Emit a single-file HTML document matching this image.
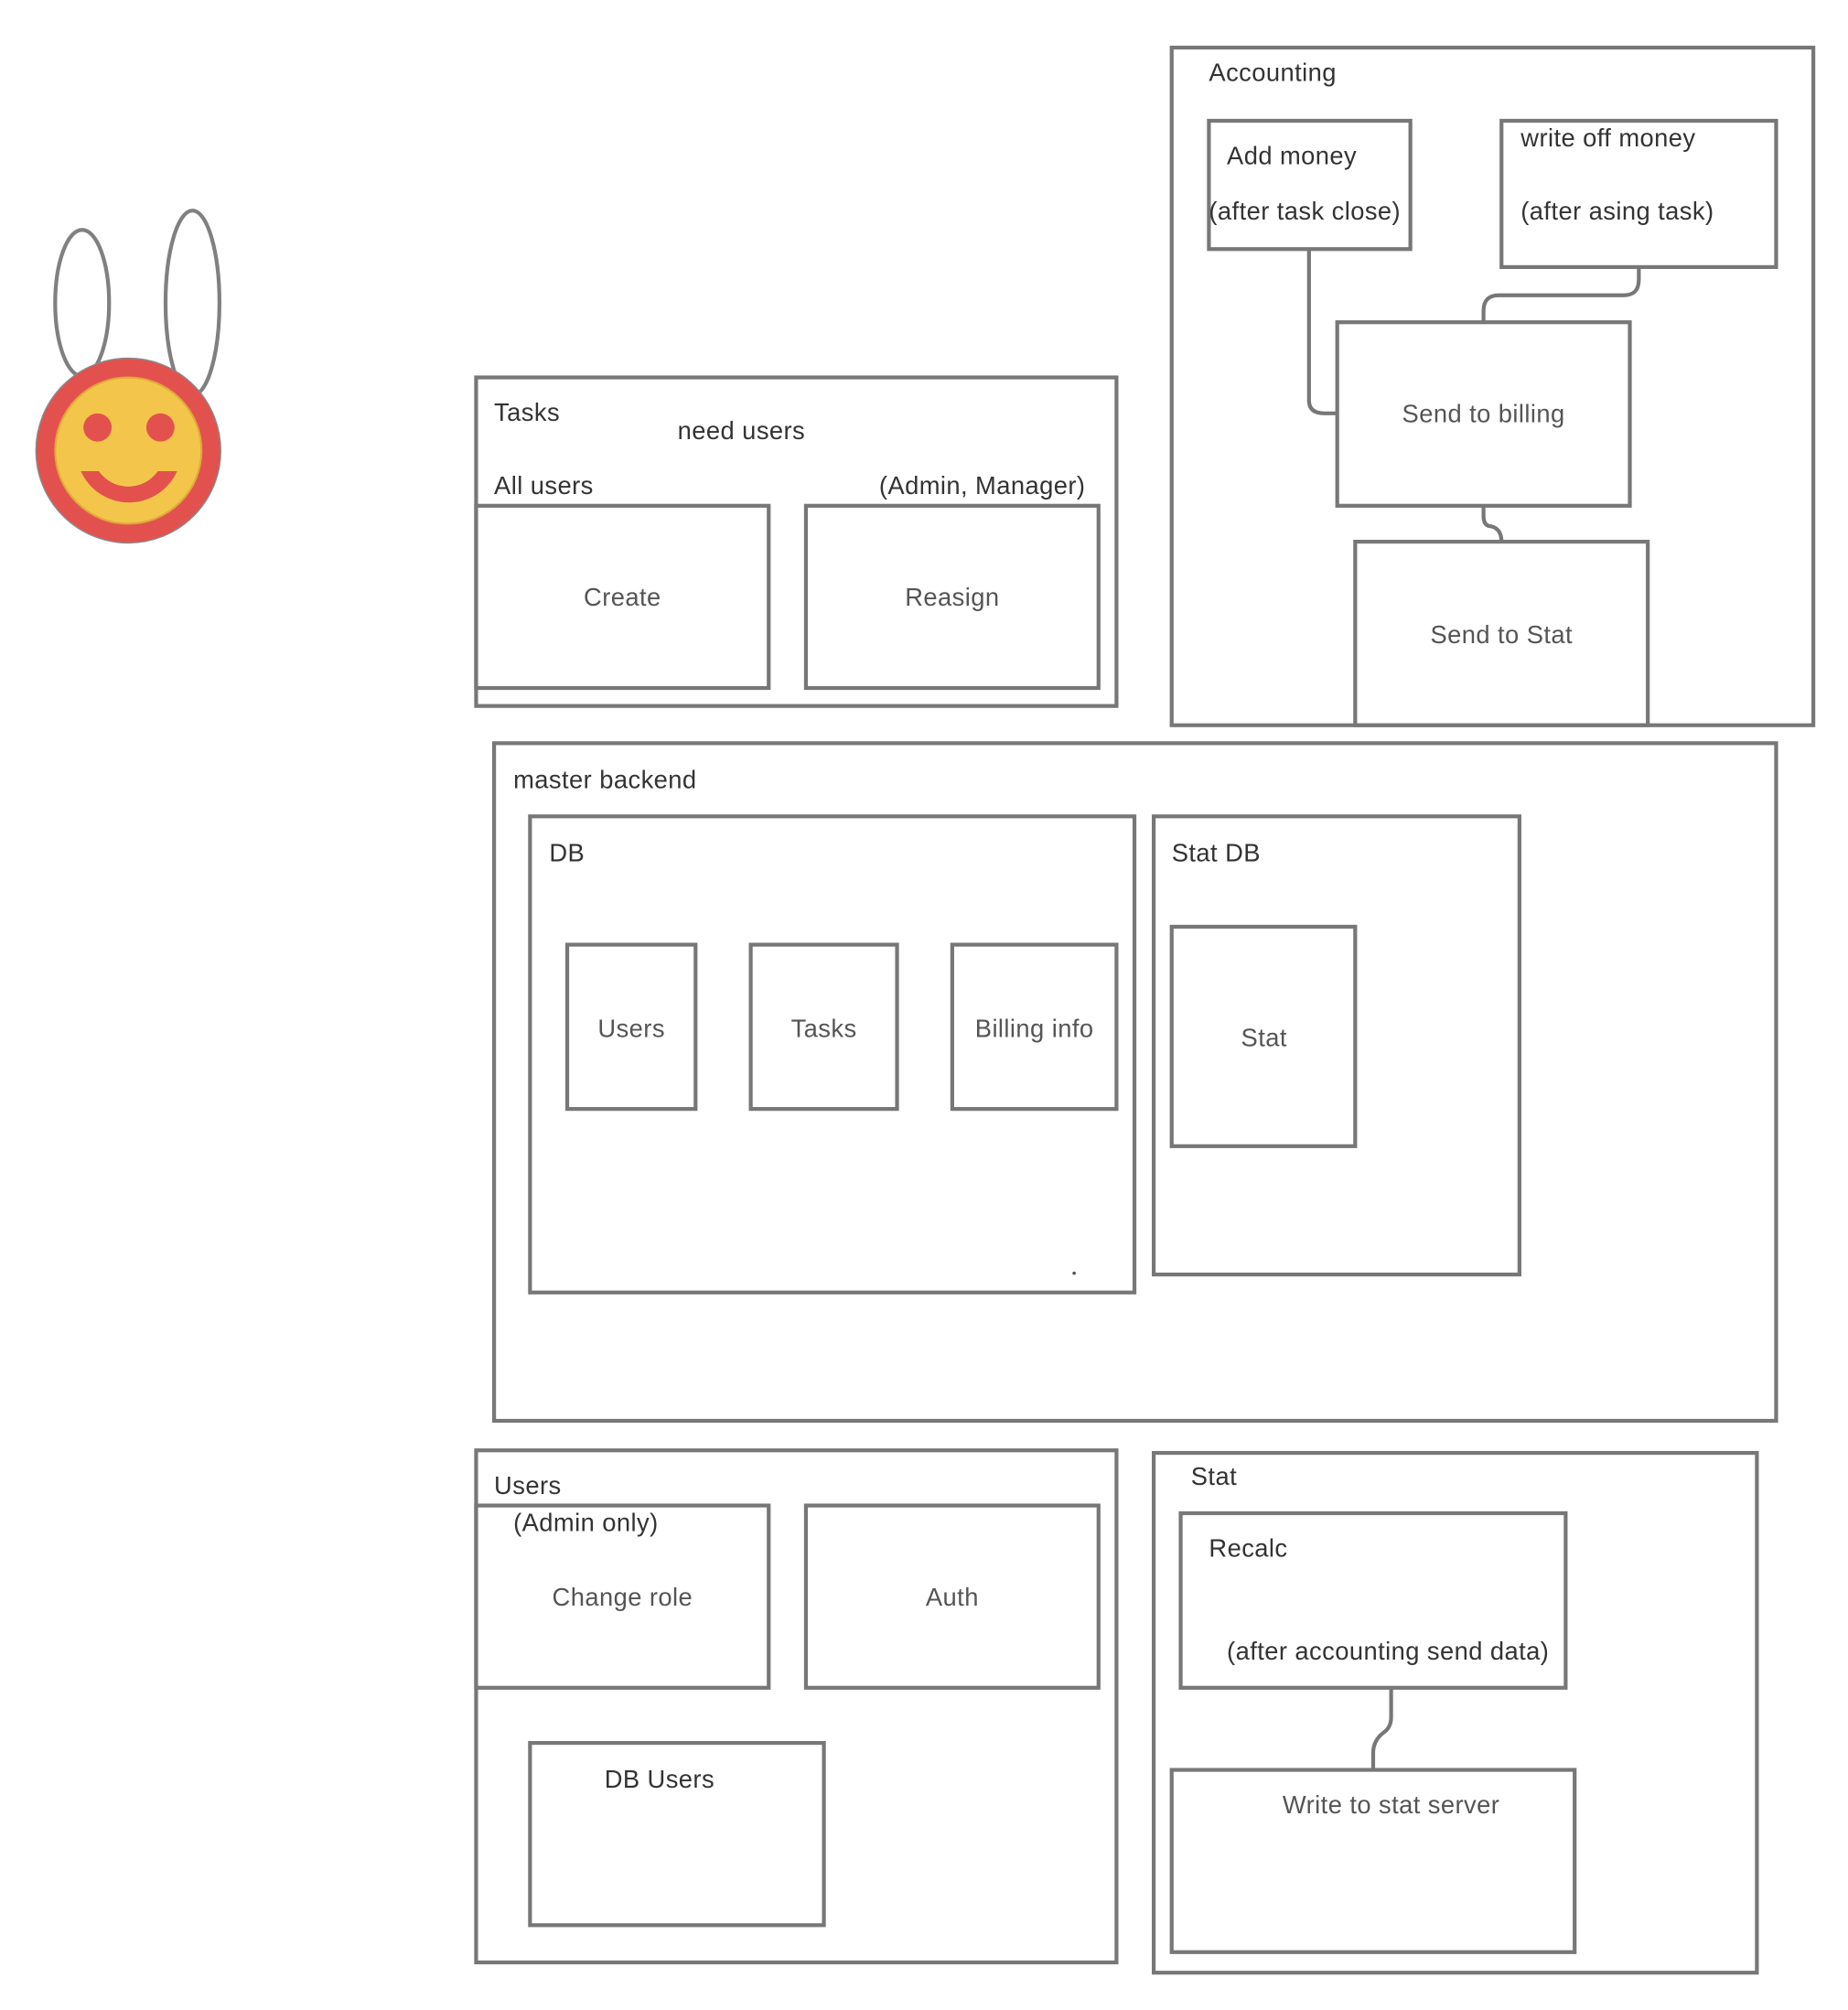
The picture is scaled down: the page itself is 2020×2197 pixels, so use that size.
<!DOCTYPE html>
<html><head><meta charset="utf-8"><style>
html,body{margin:0;padding:0;background:#fff;width:2020px;height:2197px;overflow:hidden}
svg{display:block}
text{font-family:"Liberation Sans",sans-serif;font-size:19.5px;fill:#333;letter-spacing:0.3px}
.c{fill:#555;text-anchor:middle}
rect,path.l{fill:none;stroke:#777;stroke-width:3}
</style></head><body>
<svg width="2020" height="2197" viewBox="0 0 1440 1566" xmlns="http://www.w3.org/2000/svg">
<!-- bunny -->
<ellipse cx="64" cy="236" rx="21" ry="57" fill="none" stroke="#808080" stroke-width="3"/>
<ellipse cx="150" cy="236" rx="21" ry="72" fill="none" stroke="#808080" stroke-width="3"/>
<circle cx="100" cy="351" r="72" fill="#e3514e" stroke="#8a8a8a" stroke-width="1"/>
<circle cx="100" cy="351" r="57" fill="#f3c64b" stroke="#e0a93a" stroke-width="1.5"/>
<circle cx="76" cy="333" r="11" fill="#e3514e"/>
<circle cx="125" cy="333" r="11" fill="#e3514e"/>
<path d="M63 367 L77 367 A28 28 0 0 0 123 367 L138 367 A41 41 0 0 1 63 367 Z" fill="#e3514e"/>

<!-- Accounting -->
<rect x="913" y="37" width="500" height="528"/>
<text x="942" y="63">Accounting</text>
<rect x="942" y="94" width="157" height="100"/>
<text x="956" y="128">Add money</text>
<text x="942" y="171">(after task close)</text>
<rect x="1170" y="94" width="214" height="114"/>
<text x="1185" y="114">write off money</text>
<text x="1185" y="171">(after asing task)</text>
<path class="l" d="M1020 194 V312 Q1020 322 1032 322 H1042"/>
<path class="l" d="M1277 208 V218 Q1277 230 1265 230 H1168 Q1156 230 1156 242 V251"/>
<rect x="1042" y="251" width="228" height="143"/>
<text class="c" x="1156" y="329">Send to billing</text>
<path class="l" d="M1156 394 V402 Q1156 410 1162 410 Q1170 412 1170 422"/>
<rect x="1056" y="422" width="228" height="143"/>
<text class="c" x="1170" y="501">Send to Stat</text>

<!-- Tasks -->
<rect x="371" y="294" width="499" height="256"/>
<text x="385" y="328">Tasks</text>
<text x="528" y="342">need users</text>
<text x="385" y="385">All users</text>
<text x="685" y="385">(Admin, Manager)</text>
<rect x="371" y="394" width="228" height="142"/>
<text class="c" x="485" y="472">Create</text>
<rect x="628" y="394" width="228" height="142"/>
<text class="c" x="742" y="472">Reasign</text>

<!-- master backend -->
<rect x="385" y="579" width="999" height="528"/>
<text x="400" y="614">master backend</text>
<rect x="413" y="636" width="471" height="371"/>
<text x="428" y="671">DB</text>
<rect x="442" y="736" width="100" height="128"/>
<text class="c" x="492" y="808">Users</text>
<rect x="585" y="736" width="114" height="128"/>
<text class="c" x="642" y="808">Tasks</text>
<rect x="742" y="736" width="128" height="128"/>
<text class="c" x="806" y="808">Billing info</text>
<circle cx="837" cy="992" r="1.3" fill="#555"/>
<rect x="899" y="636" width="285" height="357"/>
<text x="913" y="671">Stat DB</text>
<rect x="913" y="722" width="143" height="171"/>
<text class="c" x="985" y="815">Stat</text>

<!-- Users -->
<rect x="371" y="1130" width="499" height="399"/>
<text x="385" y="1164" fill="#444">Users</text>
<rect x="371" y="1173" width="228" height="142"/>
<text x="400" y="1193">(Admin only)</text>
<text class="c" x="485" y="1251">Change role</text>
<rect x="628" y="1173" width="228" height="142"/>
<text class="c" x="742" y="1251">Auth</text>
<rect x="413" y="1358" width="229" height="142"/>
<text x="471" y="1393">DB Users</text>

<!-- Stat -->
<rect x="899" y="1132" width="470" height="405"/>
<text x="928" y="1157">Stat</text>
<rect x="920" y="1179" width="300" height="136"/>
<text x="942" y="1213">Recalc</text>
<text x="956" y="1293">(after accounting send data)</text>
<path class="l" d="M1084 1315 V1338 Q1084 1346 1078 1350 Q1070 1356 1070 1366 V1379"/>
<rect x="913" y="1379" width="314" height="142"/>
<text class="c" x="1084" y="1413">Write to stat server</text>
</svg>
</body></html>
